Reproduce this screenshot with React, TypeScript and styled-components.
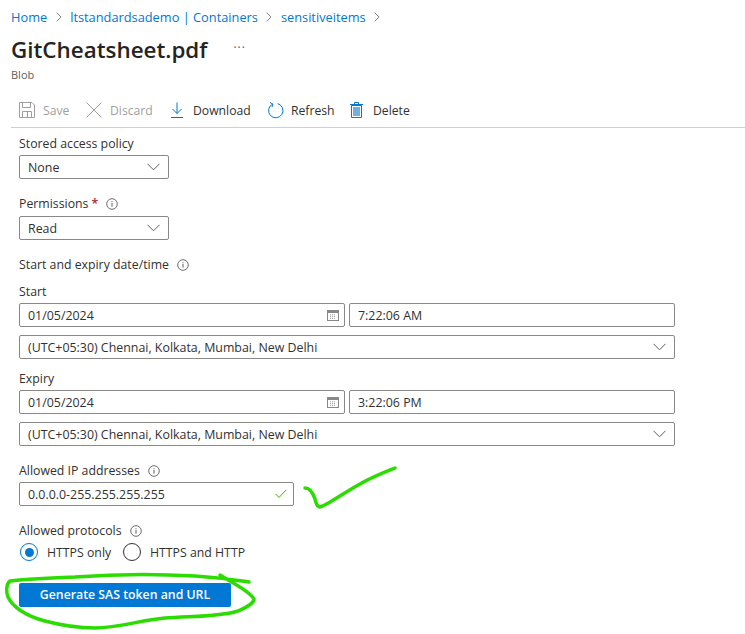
import React from 'react';
import styled, { createGlobalStyle } from 'styled-components';

const GlobalStyle = createGlobalStyle`
    html, body {
        margin: 0;
        padding: 0;
        background: #fff;
    }
    body {
        font-family: "Open Sans", "Noto Sans", "Liberation Sans", sans-serif;
        font-size: 12.4px;
        color: #323130;
    }
`;

const Page = styled.div`
    position: relative;
    width: 745px;
    height: 634px;
    overflow: hidden;
`;

const Breadcrumb = styled.nav`
    display: flex;
    align-items: center;
    height: 18px;
    padding: 8px 0 0 11px;
    gap: 8.5px;
`;

const CrumbLink = styled.a`
    color: #0078d4;
    font-size: 12.8px;
    line-height: 18px;
`;

const TitleRow = styled.div`
    display: flex;
    align-items: center;
    height: 32px;
    margin-top: 8px;
    padding-left: 11px;
`;

const Title = styled.h1`
    margin: 0;
    font-size: 22.4px;
    font-weight: 600;
    line-height: 32px;
    color: #252423;
`;

const More = styled.span`
    margin-left: 26px;
    margin-top: -4px;
    font-size: 12px;
    line-height: 12px;
    letter-spacing: 1px;
    color: #605e5c;
`;

const Subtitle = styled.div`
    margin-top: 1px;
    padding-left: 11px;
    font-size: 11px;
    line-height: 16px;
    color: #605e5c;
`;

const Toolbar = styled.div`
    display: flex;
    align-items: center;
    height: 28px;
    margin: 13px 0 0 11px;
    padding: 0 0 3px 8px;
    border-bottom: 1px solid #d2d0ce;
`;

const ToolButton = styled.div<{ $disabled?: boolean; $gap: number; $width: number }>`
    display: flex;
    align-items: center;
    gap: ${p => p.$gap}px;
    width: ${p => p.$width}px;
    font-size: 12.2px;
    color: ${p => (p.$disabled ? '#a19f9d' : '#323130')};
`;

const Form = styled.div`
    padding: 7px 0 0 19px;
`;

const Label = styled.div<{ $top?: number; $bottom?: number }>`
    display: flex;
    align-items: center;
    height: 18px;
    margin-top: ${p => p.$top ?? 0}px;
    margin-bottom: ${p => p.$bottom ?? 2}px;
    font-size: 12.3px;
    line-height: 18px;
`;

const Required = styled.span`
    color: #a4262c;
    font-weight: 600;
    margin-left: 3px;
`;

const InfoWrap = styled.span`
    display: inline-flex;
    margin-left: 8px;
`;

const Box = styled.div<{ $width: number; $endPad?: number }>`
    display: flex;
    align-items: center;
    justify-content: space-between;
    box-sizing: border-box;
    width: ${p => p.$width}px;
    height: 24px;
    padding: 0 ${p => p.$endPad ?? 8}px 0 8px;
    border: 1px solid #8a8886;
    border-radius: 2px;
    background: #fff;
`;

const DateRow = styled.div`
    display: flex;
    gap: 4px;
    margin-bottom: 8px;
`;

const RadioRow = styled.div`
    display: flex;
    align-items: center;
    height: 20px;
    padding-left: 1px;
`;

const RadioOption = styled.label<{ $width: number }>`
    display: flex;
    align-items: center;
    gap: 9px;
    width: ${p => p.$width}px;
    font-size: 12.3px;
`;

const Radio = styled.span<{ $checked?: boolean }>`
    position: relative;
    box-sizing: border-box;
    display: block;
    width: 18px;
    height: 18px;
    border-radius: 50%;
    border: 1px solid ${p => (p.$checked ? '#0078d4' : '#323130')};
    &::after {
        content: '';
        display: ${p => (p.$checked ? 'block' : 'none')};
        position: absolute;
        left: 3.5px;
        top: 3.5px;
        width: 9px;
        height: 9px;
        border-radius: 50%;
        background: #0078d4;
    }
`;

const PrimaryButton = styled.button`
    display: block;
    width: 212px;
    height: 24px;
    margin-top: 21px;
    padding: 0;
    border: 0;
    border-radius: 2px;
    background: #0078d4;
    color: #fff;
    font-family: inherit;
    font-size: 12.3px;
    font-weight: 600;
    line-height: 22px;
`;

const Scribble = styled.svg`
    position: absolute;
    left: 0;
    top: 0;
    pointer-events: none;
`;

const Chevron = () => (
    <svg width="13" height="8" viewBox="0 0 13 8" style={{ flex: 'none' }}>
        <path d="M0.5 0.8 L6.5 6.8 L12.5 0.8" fill="none" stroke="#605e5c" strokeWidth="1" />
    </svg>
);

const Crumb = () => (
    <svg width="6" height="10" viewBox="0 0 6 10">
        <path d="M0.7 0.7 L5 5 L0.7 9.3" fill="none" stroke="#8a8886" strokeWidth="1" />
    </svg>
);

const Info = () => (
    <svg width="12" height="12" viewBox="0 0 12 12">
        <circle cx="6" cy="6" r="5.3" fill="none" stroke="#605e5c" strokeWidth="0.9" />
        <rect x="5.5" y="5" width="1" height="3.6" fill="#605e5c" />
        <rect x="5.5" y="3.2" width="1" height="1" fill="#605e5c" />
    </svg>
);

const Calendar = () => (
    <svg width="12" height="12" viewBox="0 0 12 12">
        <rect x="0.5" y="1.5" width="11" height="10" fill="none" stroke="#8a8886" />
        <rect x="1" y="2" width="10" height="2" fill="#8a8886" />
        <path d="M3 5.8h6M3 7.6h6M3 9.4h6" stroke="#a19f9d" strokeDasharray="1 1" />
    </svg>
);

const SaveIcon = () => (
    <svg width="16" height="16" viewBox="0 0 16 16" fill="none" stroke="#a19f9d">
        <path d="M0.5 0.5H13L15.5 3V15.5H0.5Z" />
        <path d="M3.5 0.5V5.5H11.5V0.5M3.5 15.5V9.5H12.5V15.5M8.5 9.5V15.5" />
    </svg>
);

const DiscardIcon = () => (
    <svg width="16" height="16" viewBox="0 0 16 16" fill="none" stroke="#a19f9d">
        <path d="M0.5 0.5L15.5 15.5M15.5 0.5L0.5 15.5" />
    </svg>
);

const DownloadIcon = () => (
    <svg width="14" height="16" viewBox="0 0 14 16" fill="none" stroke="#0078d4">
        <path d="M7 0.5V11.5M2.5 7L7 11.5L11.5 7M1 15.5H13" />
    </svg>
);

const RefreshIcon = () => (
    <svg width="17" height="17" viewBox="0 0 17 17" fill="none" stroke="#0078d4">
        <path d="M5.6 2.1A7.2 7.2 0 1 0 10.6 1.6" />
        <path d="M3 0.5L6 2.2L5 5" />
    </svg>
);

const DeleteIcon = () => (
    <svg width="13" height="16" viewBox="0 0 13 16">
        <path d="M1.5 3.5H11.5V15.5H1.5Z" fill="#fff" stroke="#0078d4" />
        <rect x="3" y="5" width="7" height="9" fill="#6cb0e4" />
        <path d="M0 2.5H13M4.5 2.5V0.5H8.5V2.5" fill="none" stroke="#0078d4" />
    </svg>
);

const Check = () => (
    <svg width="12" height="10" viewBox="0 0 12 10">
        <path d="M0.7 5 L4 8.5 L11.3 0.8" fill="none" stroke="#57a300" strokeWidth="1" />
    </svg>
);

function TimeBlock({ date, time }: { date: string; time: string }) {
    return (
        <>
            <DateRow>
                <Box $width={326} $endPad={5}>
                    {date}
                    <Calendar />
                </Box>
                <Box $width={326}>{time}</Box>
            </DateRow>
            <Box $width={656}>
                (UTC+05:30) Chennai, Kolkata, Mumbai, New Delhi
                <Chevron />
            </Box>
        </>
    );
}

function App() {
    return (
        <Page>
            <GlobalStyle />
            <Breadcrumb>
                <CrumbLink>Home</CrumbLink>
                <Crumb />
                <CrumbLink>ltstandardsademo | Containers</CrumbLink>
                <Crumb />
                <CrumbLink>sensitiveitems</CrumbLink>
                <Crumb />
            </Breadcrumb>
            <TitleRow>
                <Title>GitCheatsheet.pdf</Title>
                <More>···</More>
            </TitleRow>
            <Subtitle>Blob</Subtitle>
            <Toolbar>
                <ToolButton $disabled $gap={8} $width={67}><SaveIcon />Save</ToolButton>
                <ToolButton $disabled $gap={8} $width={84}><DiscardIcon />Discard</ToolButton>
                <ToolButton $gap={9} $width={97}><DownloadIcon />Download</ToolButton>
                <ToolButton $gap={7} $width={83}><RefreshIcon />Refresh</ToolButton>
                <ToolButton $gap={10} $width={70}><DeleteIcon />Delete</ToolButton>
            </Toolbar>
            <Form>
                <Label>Stored access policy</Label>
                <Box $width={150}>None<Chevron /></Box>
                <Label $top={16} $bottom={3}>Permissions<Required>*</Required><InfoWrap><Info /></InfoWrap></Label>
                <Box $width={150}>Read<Chevron /></Box>
                <Label $top={16}>Start and expiry date/time<InfoWrap><Info /></InfoWrap></Label>
                <Label $top={9}>Start</Label>
                <TimeBlock date="01/05/2024" time="7:22:06 AM" />
                <Label $top={11}>Expiry</Label>
                <TimeBlock date="01/05/2024" time="3:22:06 PM" />
                <Label $top={16}>Allowed IP addresses<InfoWrap><Info /></InfoWrap></Label>
                <Box $width={275} $endPad={6}>0.0.0.0-255.255.255.255<Check /></Box>
                <Label $top={16}>Allowed protocols<InfoWrap><Info /></InfoWrap></Label>
                <RadioRow>
                    <RadioOption $width={103}><Radio $checked />HTTPS only</RadioOption>
                    <RadioOption $width={140}><Radio />HTTPS and HTTP</RadioOption>
                </RadioRow>
                <PrimaryButton>Generate SAS token and URL</PrimaryButton>
            </Form>
            <Scribble width="745" height="634" viewBox="0 0 745 634" fill="none" stroke="#2bdc00" strokeWidth="3.5" strokeLinecap="round" strokeLinejoin="round">
                <path d="M305 488 C310 488 313 493 315 499 C316 503 317 507 320 507 C326 506 345 492 360 484 C372 477 385 472 395 468" />
                <path d="M249 582 C235 580 225 578 195 576 C160 574 115 574 75 577 C50 578 25 579 10 581 C6 584 6 592 8 597 C12 606 25 616 45 621 C60 625 75 628 95 628 C120 628 140 620 165 618 C190 616 220 617 238 611 C248 607 254 602 254 599 C250 592 238 586 230 581 C226 579 223 577 220 575" />
            </Scribble>
        </Page>
    );
}

export default App;
